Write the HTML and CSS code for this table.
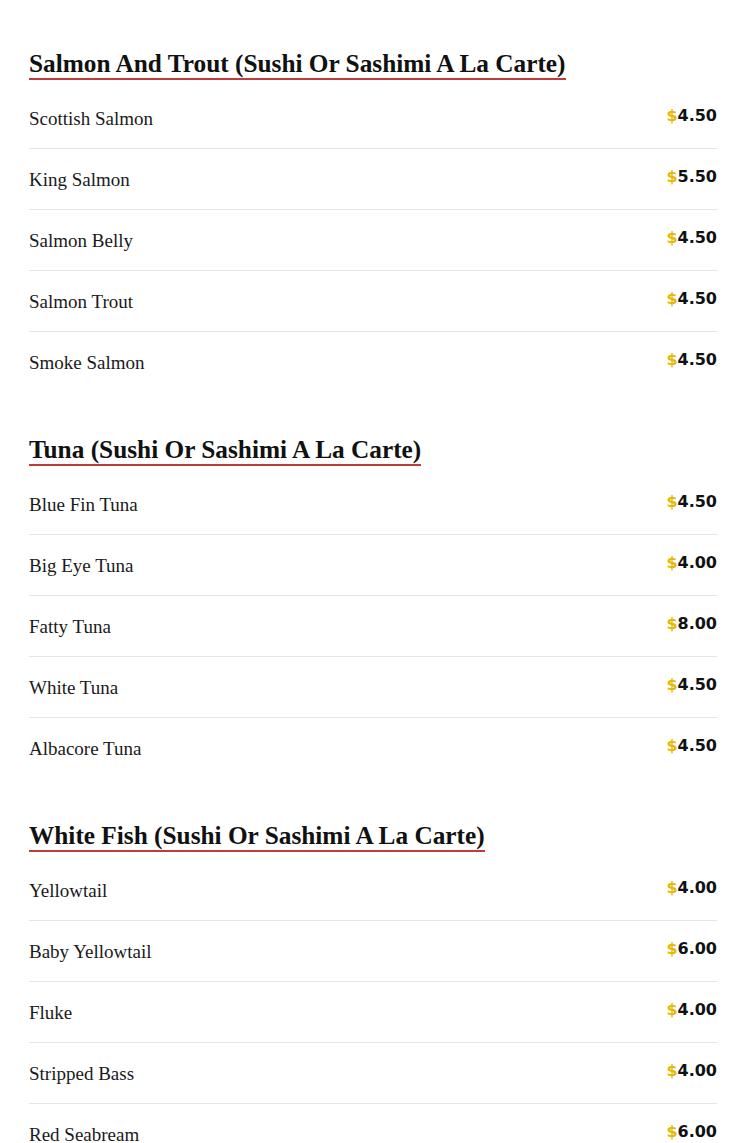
FILE: index.html
```html
<!DOCTYPE html>
<html>
<head>
<meta charset="utf-8">
<link rel="stylesheet" href="styles.css">
</head>
<body>
<main class="menu">
  <section class="section">
    <h2 class="title">Salmon And Trout (Sushi Or Sashimi A La Carte)</h2>
    <ul class="items">
      <li class="item"><span class="name">Scottish Salmon</span><span class="price"><span class="cur">$</span>4.50</span></li>
      <li class="item"><span class="name">King Salmon</span><span class="price"><span class="cur">$</span>5.50</span></li>
      <li class="item"><span class="name">Salmon Belly</span><span class="price"><span class="cur">$</span>4.50</span></li>
      <li class="item"><span class="name">Salmon Trout</span><span class="price"><span class="cur">$</span>4.50</span></li>
      <li class="item"><span class="name">Smoke Salmon</span><span class="price"><span class="cur">$</span>4.50</span></li>
    </ul>
  </section>
  <section class="section">
    <h2 class="title">Tuna (Sushi Or Sashimi A La Carte)</h2>
    <ul class="items">
      <li class="item"><span class="name">Blue Fin Tuna</span><span class="price"><span class="cur">$</span>4.50</span></li>
      <li class="item"><span class="name">Big Eye Tuna</span><span class="price"><span class="cur">$</span>4.00</span></li>
      <li class="item"><span class="name">Fatty Tuna</span><span class="price"><span class="cur">$</span>8.00</span></li>
      <li class="item"><span class="name">White Tuna</span><span class="price"><span class="cur">$</span>4.50</span></li>
      <li class="item"><span class="name">Albacore Tuna</span><span class="price"><span class="cur">$</span>4.50</span></li>
    </ul>
  </section>
  <section class="section">
    <h2 class="title">White Fish (Sushi Or Sashimi A La Carte)</h2>
    <ul class="items">
      <li class="item"><span class="name">Yellowtail</span><span class="price"><span class="cur">$</span>4.00</span></li>
      <li class="item"><span class="name">Baby Yellowtail</span><span class="price"><span class="cur">$</span>6.00</span></li>
      <li class="item"><span class="name">Fluke</span><span class="price"><span class="cur">$</span>4.00</span></li>
      <li class="item"><span class="name">Stripped Bass</span><span class="price"><span class="cur">$</span>4.00</span></li>
      <li class="item"><span class="name">Red Seabream</span><span class="price"><span class="cur">$</span>6.00</span></li>
    </ul>
  </section>
</main>
</body>
</html>
```
FILE: styles.css
```css
html, body {
  margin: 0;
  padding: 0;
  background: #ffffff;
}
.menu {
  padding: 48px 28px 0 29px;
  display: flex;
  flex-direction: column;
  gap: 42px;
}
.section {
  display: flex;
  flex-direction: column;
  align-items: flex-start;
}
.title {
  margin: 0;
  display: inline-block;
  font-family: "Liberation Serif", "DejaVu Serif", serif;
  font-weight: 700;
  font-size: 25.3px;
  line-height: 30px;
  color: #111111;
  border-bottom: 2px solid #c23b3b;
}
.items {
  list-style: none;
  margin: 8px 0 0 0;
  padding: 0;
  align-self: stretch;
}
.item {
  height: 60px;
  display: flex;
  align-items: center;
  justify-content: space-between;
  border-bottom: 1px solid #e6e6e6;
}
.item:last-child {
  border-bottom: none;
}
.name {
  font-family: "Liberation Serif", "DejaVu Serif", serif;
  font-size: 19px;
  color: #1a1a1a;
  padding-top: 2px;
}
.price {
  font-family: "DejaVu Sans", sans-serif;
  font-weight: 700;
  font-size: 16px;
  color: #111111;
  margin-bottom: 6px;
}
.cur {
  color: #e6b800;
}
```
